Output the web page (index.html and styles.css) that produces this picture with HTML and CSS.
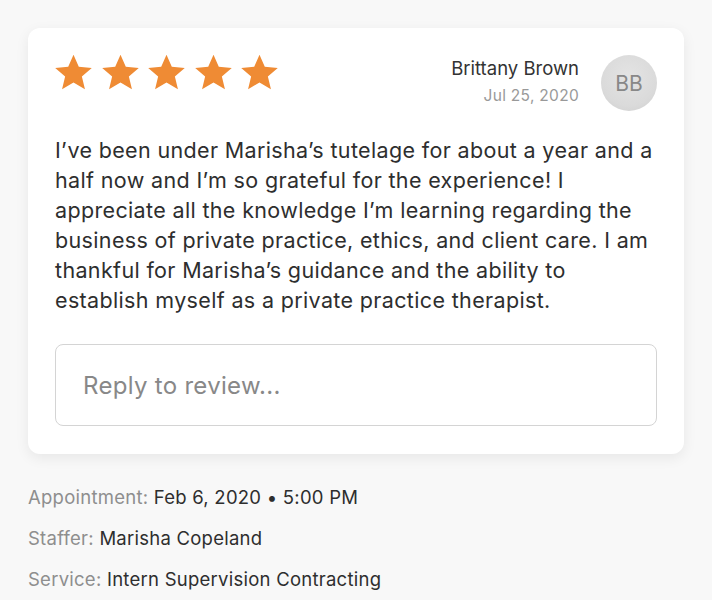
FILE: index.html
```html
<!DOCTYPE html>
<html>
<head>
<meta charset="utf-8">
<link rel="stylesheet" href="styles.css">
</head>
<body>
<div class="page">
  <div class="card">
    <div class="card-head">
      <div class="stars">
        <svg class="star" viewBox="0 0 24 24"><path d="M12 1.6l3.1 7 7.6.7-5.8 5 1.8 7.5L12 17.8l-6.7 4 1.8-7.5-5.8-5 7.6-.7z"/></svg>
        <svg class="star" viewBox="0 0 24 24"><path d="M12 1.6l3.1 7 7.6.7-5.8 5 1.8 7.5L12 17.8l-6.7 4 1.8-7.5-5.8-5 7.6-.7z"/></svg>
        <svg class="star" viewBox="0 0 24 24"><path d="M12 1.6l3.1 7 7.6.7-5.8 5 1.8 7.5L12 17.8l-6.7 4 1.8-7.5-5.8-5 7.6-.7z"/></svg>
        <svg class="star" viewBox="0 0 24 24"><path d="M12 1.6l3.1 7 7.6.7-5.8 5 1.8 7.5L12 17.8l-6.7 4 1.8-7.5-5.8-5 7.6-.7z"/></svg>
        <svg class="star" viewBox="0 0 24 24"><path d="M12 1.6l3.1 7 7.6.7-5.8 5 1.8 7.5L12 17.8l-6.7 4 1.8-7.5-5.8-5 7.6-.7z"/></svg>
      </div>
      <div class="author">
        <div class="author-text">
          <div class="author-name">Brittany Brown</div>
          <div class="author-date">Jul 25, 2020</div>
        </div>
        <div class="avatar">BB</div>
      </div>
    </div>
    <p class="review">I’ve been under Marisha’s tutelage for about a year and a half now and I’m so grateful for the experience! I appreciate all the knowledge I’m learning regarding the business of private practice, ethics, and client care. I am thankful for Marisha’s guidance and the ability to establish myself as a private practice therapist.</p>
    <div class="reply">Reply to review...</div>
  </div>
  <div class="details">
    <div class="row"><span class="label">Appointment:</span> <span class="value">Feb 6, 2020 • 5:00 PM</span></div>
    <div class="row"><span class="label">Staffer:</span> <span class="value">Marisha Copeland</span></div>
    <div class="row"><span class="label">Service:</span> <span class="value">Intern Supervision Contracting</span></div>
  </div>
</div>
</body>
</html>
```
FILE: styles.css
```css
html, body {
  margin: 0;
  padding: 0;
  background: #f8f8f8;
}
body {
  font-family: "Inter", "Open Sans", sans-serif;
  color: #333;
}
.page {
  padding: 28px 28px 0 28px;
}
.card {
  background: #fff;
  border-radius: 12px;
  box-shadow: 0 4px 14px rgba(0,0,0,0.07);
  padding: 27px 27px 28px 27px;
}
.card-head {
  display: flex;
  justify-content: space-between;
  align-items: flex-start;
}
.stars {
  display: flex;
  gap: 5.5px;
  margin: -3px 0 0 -2px;
}
.star {
  width: 41px;
  height: 41px;
  fill: #ef8b34;
}
.author {
  display: flex;
  align-items: flex-start;
  gap: 22px;
}
.author-text {
  text-align: right;
  padding-top: 1px;
}
.author-name {
  font-size: 18.5px;
  line-height: 24px;
  color: #333;
}
.author-date {
  font-size: 15.5px;
  line-height: 22px;
  letter-spacing: 0.3px;
  color: #999;
  margin-top: 5px;
}
.avatar {
  width: 56px;
  height: 56px;
  border-radius: 50%;
  background: radial-gradient(circle at 50% 40%, #e4e4e4 0%, #dadada 65%, #cccccc 100%);
  color: #888;
  font-size: 21px;
  display: flex;
  align-items: center;
  justify-content: center;
}
.review {
  margin: 24px 0 0 0;
  font-size: 21.5px;
  line-height: 30px;
  letter-spacing: 0.35px;
  color: #2e2e2e;
}
.reply {
  margin-top: 29px;
  border: 1.5px solid #d4d4d4;
  border-radius: 8px;
  height: 82px;
  box-sizing: border-box;
  padding: 0 27px;
  display: flex;
  align-items: center;
  font-size: 24px;
  letter-spacing: 0.3px;
  color: #888;
}
.details {
  padding-top: 32px;
}
.row {
  font-size: 18.5px;
  line-height: 22px;
  letter-spacing: 0.25px;
  margin-bottom: 19px;
}
.label {
  color: #8e8e8e;
}
.value {
  color: #2e2e2e;
}
```
